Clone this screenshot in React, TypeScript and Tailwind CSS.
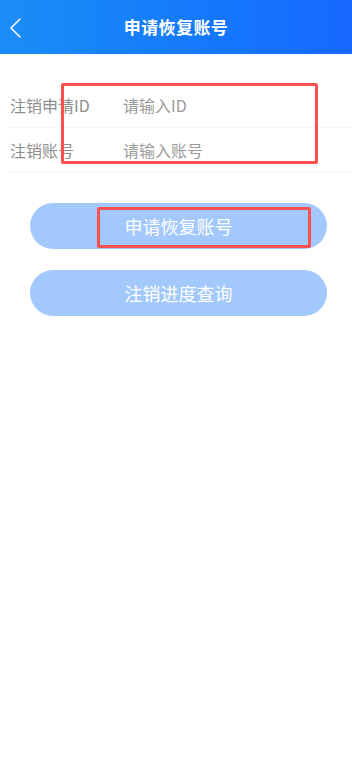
import { useState } from 'react'

const FONT = { fontFamily: '"Noto Sans CJK SC", "Noto Sans", sans-serif' }

function Row({ label, placeholder, value, onChange }: {
  label: string
  placeholder: string
  value: string
  onChange: (v: string) => void
}) {
  return (
    <div className="flex items-center h-[45px] border-b border-[#f6f6f6] ml-[8px] pl-[2px]">
      <span className="w-[113px] shrink-0 text-[16px] text-[#8e8e8e]">{label}</span>
      <input
        value={value}
        onChange={(e) => onChange(e.target.value)}
        placeholder={placeholder}
        className="flex-1 min-w-0 bg-transparent text-[16px] text-[#333] placeholder:text-[#9a9a9a] outline-none"
        style={FONT}
      />
    </div>
  )
}

export default function App() {
  const [applyId, setApplyId] = useState('')
  const [account, setAccount] = useState('')

  return (
    <div className="relative min-h-[774px] w-full bg-white" style={FONT}>
      <header className="relative h-[54px] flex items-center justify-center bg-gradient-to-r from-[#1b8df6] to-[#1768ff]">
        <button type="button" className="absolute left-[6px] top-[14px] p-[2px]">
          <svg width="16" height="24" viewBox="0 0 16 24" fill="none" stroke="white" strokeWidth={1.5} strokeLinecap="round" strokeLinejoin="round">
            <path d="M12 3 L3 12 L12 21" />
          </svg>
        </button>
        <h1 className="text-[17px] font-bold text-white tracking-[0.4px]">申请恢复账号</h1>
      </header>

      <div className="pt-[29px]">
        <Row label="注销申请ID" placeholder="请输入ID" value={applyId} onChange={setApplyId} />
        <Row label="注销账号" placeholder="请输入账号" value={account} onChange={setAccount} />
      </div>

      <div className="flex flex-col gap-[21px] pl-[30px] pr-[25px] pt-[30px]">
        <button type="button" className="h-[46px] rounded-full bg-[#a3c9fc] text-[18px] text-white">
          申请恢复账号
        </button>
        <button type="button" className="h-[46px] rounded-full bg-[#a3c9fc] text-[18px] text-white">
          注销进度查询
        </button>
      </div>

      {/* annotation boxes */}
      <div className="absolute left-[61px] top-[83px] w-[257px] h-[81px] border-[3px] border-[#fb5050] rounded-[2px] pointer-events-none" />
      <div className="absolute left-[97px] top-[207px] w-[214px] h-[41px] border-[3px] border-[#fb5050] rounded-[2px] pointer-events-none" />
    </div>
  )
}
